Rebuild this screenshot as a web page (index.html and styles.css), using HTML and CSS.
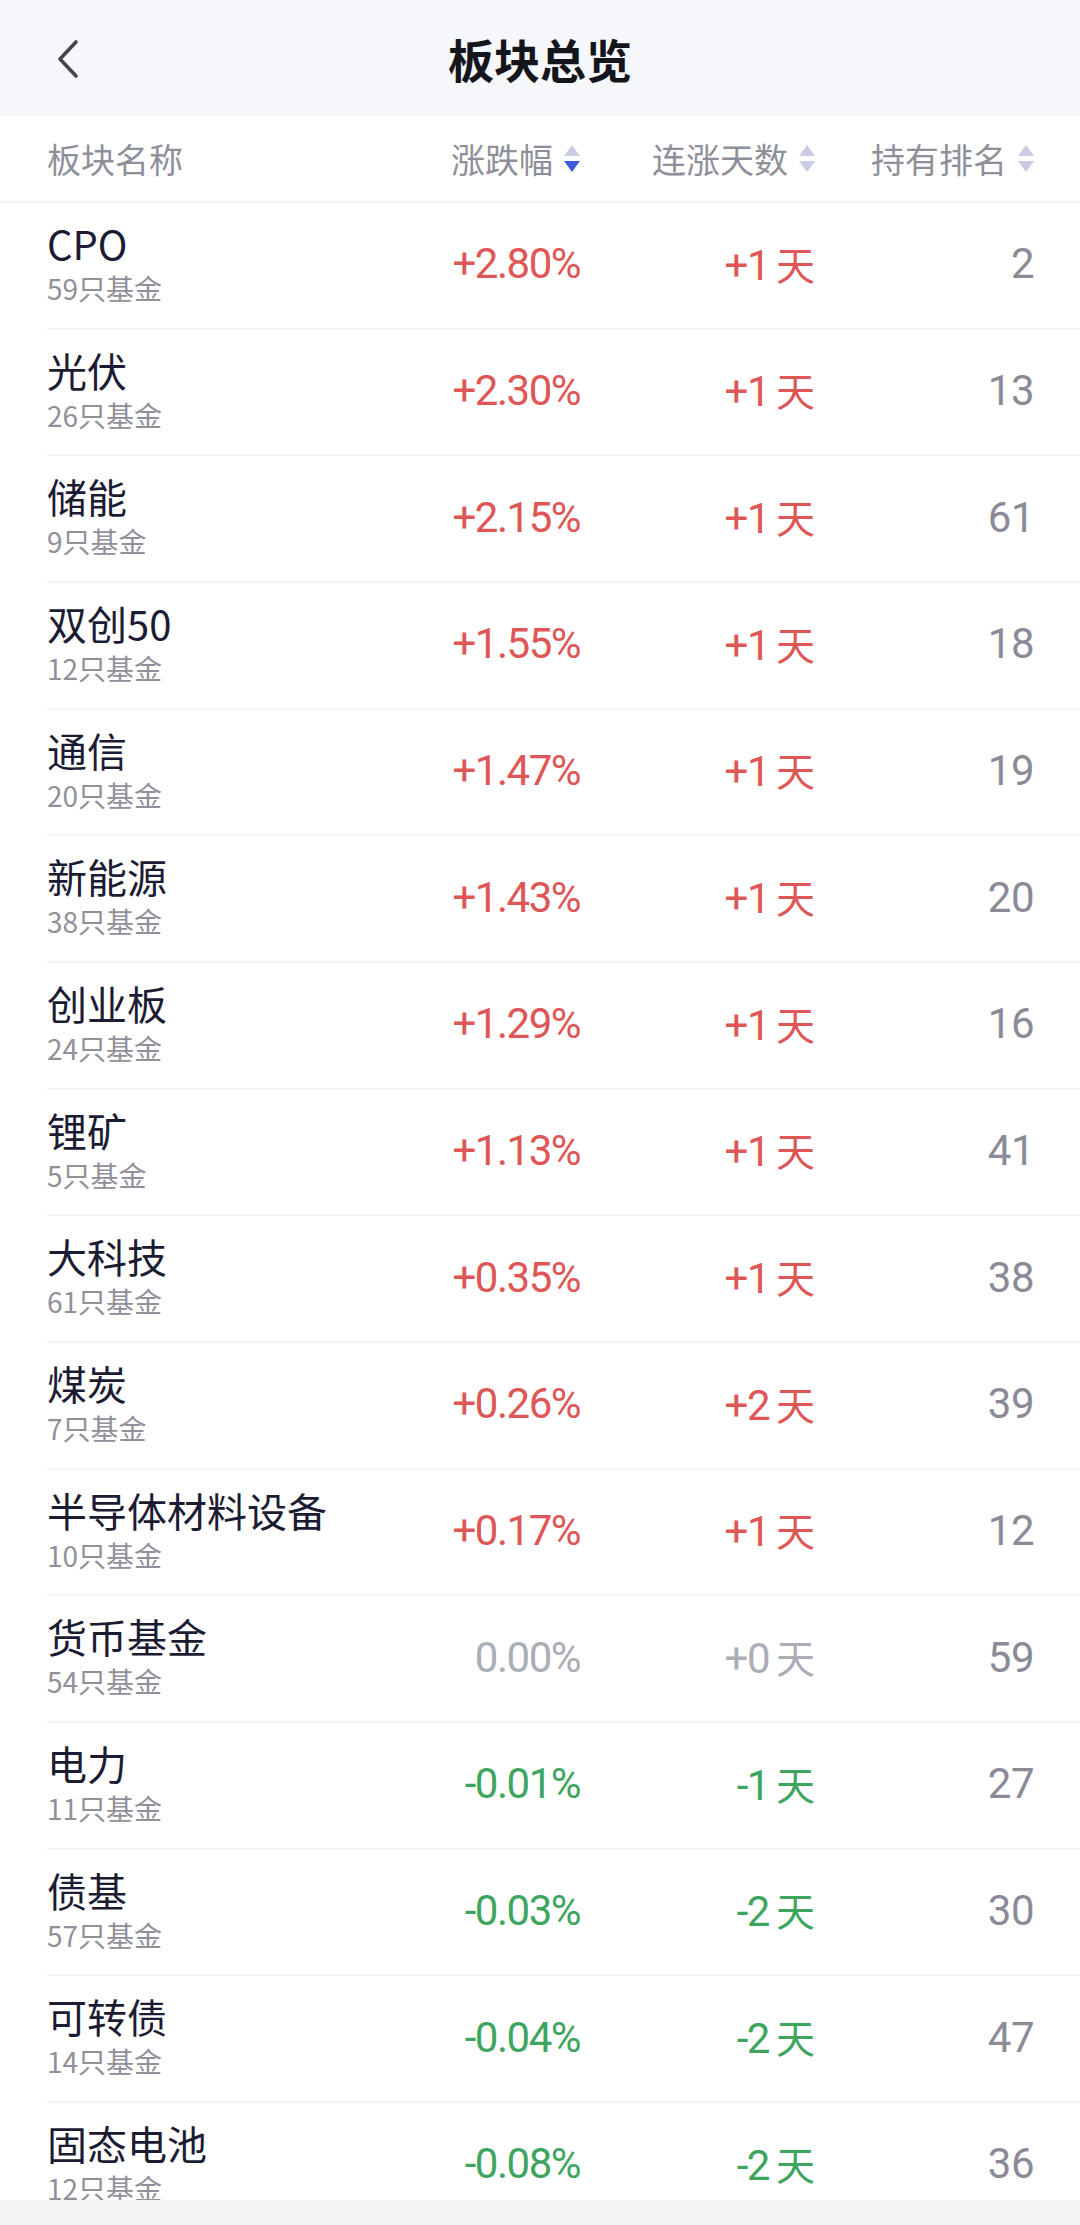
FILE: index.html
```html
<!DOCTYPE html>
<html lang="zh-CN">
<head>
<meta charset="utf-8">
<title>板块总览</title>
<link rel="stylesheet" href="styles.css">
</head>
<body>
<div class="page">
  <header class="topbar">
    <div class="back">
      <svg width="30" height="44" viewBox="0 0 30 44"><path d="M24 5 L8 22 L24 39" fill="none" stroke="#44454f" stroke-width="3.6" stroke-linecap="round" stroke-linejoin="round"/></svg>
    </div>
    <h1 class="title">板块总览</h1>
    <div class="spacer"></div>
  </header>

  <div class="colhead">
    <div class="ch ch-name">板块名称</div>
    <div class="ch ch-r">涨跌幅<span class="sort"><i class="up"></i><i class="down active"></i></span></div>
    <div class="ch ch-r">连涨天数<span class="sort"><i class="up"></i><i class="down"></i></span></div>
    <div class="ch ch-r">持有排名<span class="sort"><i class="up"></i><i class="down"></i></span></div>
  </div>

  <main class="list">
    <div class="row"><div class="name"><div class="n">CPO</div><div class="s">59只基金</div></div><div class="num red">+2.80%</div><div class="num red">+1<span class="d">天</span></div><div class="num rank">2</div></div>
    <div class="row"><div class="name"><div class="n">光伏</div><div class="s">26只基金</div></div><div class="num red">+2.30%</div><div class="num red">+1<span class="d">天</span></div><div class="num rank">13</div></div>
    <div class="row"><div class="name"><div class="n">储能</div><div class="s">9只基金</div></div><div class="num red">+2.15%</div><div class="num red">+1<span class="d">天</span></div><div class="num rank">61</div></div>
    <div class="row"><div class="name"><div class="n">双创50</div><div class="s">12只基金</div></div><div class="num red">+1.55%</div><div class="num red">+1<span class="d">天</span></div><div class="num rank">18</div></div>
    <div class="row"><div class="name"><div class="n">通信</div><div class="s">20只基金</div></div><div class="num red">+1.47%</div><div class="num red">+1<span class="d">天</span></div><div class="num rank">19</div></div>
    <div class="row"><div class="name"><div class="n">新能源</div><div class="s">38只基金</div></div><div class="num red">+1.43%</div><div class="num red">+1<span class="d">天</span></div><div class="num rank">20</div></div>
    <div class="row"><div class="name"><div class="n">创业板</div><div class="s">24只基金</div></div><div class="num red">+1.29%</div><div class="num red">+1<span class="d">天</span></div><div class="num rank">16</div></div>
    <div class="row"><div class="name"><div class="n">锂矿</div><div class="s">5只基金</div></div><div class="num red">+1.13%</div><div class="num red">+1<span class="d">天</span></div><div class="num rank">41</div></div>
    <div class="row"><div class="name"><div class="n">大科技</div><div class="s">61只基金</div></div><div class="num red">+0.35%</div><div class="num red">+1<span class="d">天</span></div><div class="num rank">38</div></div>
    <div class="row"><div class="name"><div class="n">煤炭</div><div class="s">7只基金</div></div><div class="num red">+0.26%</div><div class="num red">+2<span class="d">天</span></div><div class="num rank">39</div></div>
    <div class="row"><div class="name"><div class="n">半导体材料设备</div><div class="s">10只基金</div></div><div class="num red">+0.17%</div><div class="num red">+1<span class="d">天</span></div><div class="num rank">12</div></div>
    <div class="row"><div class="name"><div class="n">货币基金</div><div class="s">54只基金</div></div><div class="num flat">0.00%</div><div class="num flat">+0<span class="d">天</span></div><div class="num rank">59</div></div>
    <div class="row"><div class="name"><div class="n">电力</div><div class="s">11只基金</div></div><div class="num green">-0.01%</div><div class="num green">-1<span class="d">天</span></div><div class="num rank">27</div></div>
    <div class="row"><div class="name"><div class="n">债基</div><div class="s">57只基金</div></div><div class="num green">-0.03%</div><div class="num green">-2<span class="d">天</span></div><div class="num rank">30</div></div>
    <div class="row"><div class="name"><div class="n">可转债</div><div class="s">14只基金</div></div><div class="num green">-0.04%</div><div class="num green">-2<span class="d">天</span></div><div class="num rank">47</div></div>
    <div class="row"><div class="name"><div class="n">固态电池</div><div class="s">12只基金</div></div><div class="num green">-0.08%</div><div class="num green">-2<span class="d">天</span></div><div class="num rank">36</div></div>
  </main>

  <footer class="bottombar"></footer>
</div>
</body>
</html>
```

FILE: styles.css
```css
* { box-sizing: border-box; }
html, body { margin: 0; padding: 0; background: #ffffff; }
body {
  font-family: "Noto Sans CJK SC", "Noto Sans", sans-serif;
  width: 1080px;
  height: 2225px;
  overflow: hidden;
}
.page { display: flex; flex-direction: column; height: 2225px; }

.topbar {
  height: 116px;
  background: #f6f7fa;
  display: grid;
  grid-template-columns: 1fr auto 1fr;
  align-items: center;
  flex: none;
}
.back { padding-left: 52px; display: flex; align-items: center; padding-top: 2px; }
.title {
  margin: 0;
  font-size: 46px;
  font-weight: 700;
  color: #15161c;
  line-height: 60px;
}

.colhead {
  flex: none;
  height: 87px;
  display: grid;
  grid-template-columns: 333px 200px 235px 219px;
  padding-left: 47px;
  padding-right: 46px;
  align-items: center;
  border-bottom: 2px solid #f0f1f4;
  font-size: 34px;
  color: #8e9099;
}
.ch { display: flex; align-items: center; line-height: 44px; }
.ch-r { justify-content: flex-end; }
.sort { display: flex; flex-direction: column; gap: 5px; margin-left: 10px; width: 17px; align-items: center; }
.sort i { display: block; width: 0; height: 0; border-left: 8.5px solid transparent; border-right: 8.5px solid transparent; }
.sort .up { border-bottom: 11px solid #c9cce2; }
.sort .down { border-top: 11px solid #c9cce2; }
.sort .down.active { border-top-color: #3f5ad8; }

.list { flex: 1; overflow: hidden; }
.row {
  height: 126.67px;
  margin-left: 47px;
  padding-right: 46px;
  border-bottom: 2px solid #f2f3f5;
  display: grid;
  grid-template-columns: 333px 200px 235px 219px;
  align-items: center;
}
.name { align-self: start; padding-top: 15px; }
.n { font-size: 40px; line-height: 50px; color: #1b1c33; white-space: nowrap; }
.s { font-size: 28px; line-height: 36px; color: #8f9099; margin-top: 2px; }

.num {
  text-align: right;
  font-family: Roboto, "Noto Sans CJK SC", sans-serif;
  font-size: 42px;
  letter-spacing: -1.5px;
  line-height: 50px;
  padding-bottom: 2px;
}
.num .d { font-family: "Noto Sans CJK SC", sans-serif; font-size: 39px; margin-left: 7px; letter-spacing: 0; }
.red { color: #de5656; }
.green { color: #3ea55f; }
.flat { color: #abadb7; }
.rank { color: #8a8b96; letter-spacing: -0.5px; }

.bottombar { flex: none; height: 25px; background: #f4f4f5; }
```
